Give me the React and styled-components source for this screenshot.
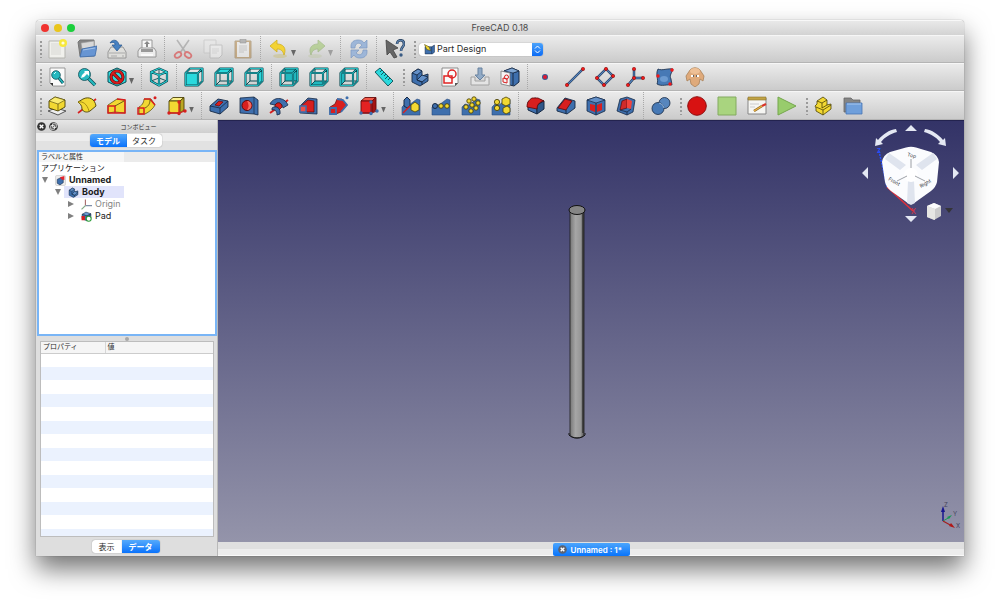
import { useState } from 'react';
import styled, { createGlobalStyle } from 'styled-components';

const GlobalStyle = createGlobalStyle`
  * {
    box-sizing: border-box;
  }

  body {
    margin: 0;
    background: #fff;
    color: #2b2b2b;
    font-family: Inter, 'Noto Sans CJK JP', sans-serif;
    font-size: 9px;
    line-height: 12px;
  }

  button,
  select {
    margin: 0;
    padding: 0;
    border: 0;
    background: none;
    color: inherit;
    font: inherit;
  }
`;

const Desktop = styled.div`
  display: flex;
  min-height: 100vh;
  padding: 20px 36px 51px;
`;

const Window = styled.main`
  display: flex;
  flex: 1;
  flex-direction: column;
  min-width: 0;
  overflow: hidden;
  border-radius: 4px 4px 0 0;
  background: #e3e3e3;
  box-shadow: 0 0 1px rgba(0, 0, 0, 0.5), 0 13px 26px rgba(0, 0, 0, 0.55);
`;

const TitleBar = styled.header`
  display: grid;
  grid-template-columns: 1fr auto 1fr;
  align-items: center;
  height: 15px;
  padding: 0 5px;
  border-top: 1px solid #f8f8f8;
  background: linear-gradient(#e9e9e9, #d3d3d3);
`;

const Lights = styled.div`
  display: flex;
  gap: 5px;
`;

const Light = styled.button`
  width: 8px;
  height: 8px;
  border-radius: 50%;
  background: ${(p) => p.$color};
`;

const Title = styled.h1`
  margin: 0;
  color: #4a4a4a;
  font-size: 9px;
  font-weight: 400;
`;

const ToolRow = styled.div`
  display: flex;
  align-items: center;
  height: ${(p) => p.$height || 28}px;
  overflow: hidden;
  border-top: 1px solid #f6f6f6;
  border-bottom: 1px solid #b4b4b4;
  background: linear-gradient(#ebebeb, #cbcbcb);
`;

const Grip = styled.span`
  flex: none;
  width: 6px;
  height: 18px;
  background: radial-gradient(circle at 5px 2px, #9a9a9a 1px, transparent 1px) 0 0 / 6px 4px;
`;

const Separator = styled.span`
  flex: none;
  align-self: stretch;
  width: ${(p) => p.$width}px;
  background: repeating-linear-gradient(#a8a8a8 0 1px, transparent 1px 2px) 2px 0 / 1px 100% no-repeat;
`;

const ToolButton = styled.button`
  display: flex;
  flex: none;
  align-items: center;
  justify-content: center;
  width: ${(p) => (p.$menu ? 37 : 30)}px;
  height: 26px;
  opacity: ${(p) => (p.$faded ? 0.5 : 1)};

  svg {
    display: block;
    width: 20px;
    height: 20px;
    flex: none;
  }
`;

const MenuArrow = styled.span`
  align-self: flex-end;
  width: 5px;
  height: 6px;
  margin: 0 0 6px 2px;
  background: #666;
  clip-path: polygon(0 0, 100% 0, 50% 100%);
`;

const Workbench = styled.label`
  display: grid;
  grid-template-columns: 16px 1fr 11px;
  align-items: center;
  width: 124px;
  height: 13px;
  margin-left: 3px;
  overflow: hidden;
  border-radius: 3px;
  background: #fff;
  box-shadow: 0 0 1px rgba(0, 0, 0, 0.5);

  > svg:first-child {
    width: 11px;
    height: 11px;
    justify-self: end;
  }
`;

const WorkbenchSelect = styled.select`
  height: 13px;
  padding-left: 2px;
  appearance: none;
  outline: none;
`;

const Stepper = styled.span`
  display: flex;
  align-items: center;
  justify-content: center;
  height: 13px;
  background: linear-gradient(#4ba3fb, #0c6bf5);
`;

const Content = styled.div`
  display: flex;
  flex: 1;
  min-height: 0;
`;

const Side = styled.aside`
  display: flex;
  flex: none;
  flex-direction: column;
  width: 182px;
  border-right: 1px solid #b9b9b9;
  background: #dedede;
`;

const DockTitle = styled.div`
  display: flex;
  align-items: center;
  gap: 3px;
  height: 13px;
  padding: 0 1px;
  background: linear-gradient(#e6e6e6, #cfcfcf);

  h2 {
    flex: 1;
    margin: 0;
    font-size: 6px;
    font-weight: 400;
    text-align: center;
  }
`;

const RoundButton = styled.button`
  width: 9px;
  height: 9px;

  svg {
    display: block;
    width: 9px;
    height: 9px;
  }
`;

const Segments = styled.div`
  display: flex;
  justify-content: center;
  padding: ${(p) => p.$padding};
  background: ${(p) => (p.$plain ? 'none' : 'linear-gradient(#ededed 50%, #e2e2e2 50%)')};
`;

const Segment = styled.button`
  width: ${(p) => p.$width}px;
  height: 13px;
  border-radius: ${(p) => (p.$last ? '0 3px 3px 0' : '3px 0 0 3px')};
  background: ${(p) => (p.$active ? 'linear-gradient(#55aafc, #0a72fb)' : '#fff')};
  box-shadow: 0 0 1px rgba(0, 0, 0, 0.5);
  color: ${(p) => (p.$active ? '#fff' : '#2b2b2b')};
  font-size: 8px;
  font-weight: ${(p) => (p.$active ? 700 : 400)};
`;

const TreeBox = styled.div`
  height: 186px;
  margin-left: 1px;
  border: 2px solid #79b5f6;
  background: #fff;
`;

const TreeHeader = styled.div`
  height: 10px;
  padding-left: 2px;
  background: linear-gradient(90deg, #f6f6f6 85px, #ebebeb 85px);
  font-size: 7px;
  line-height: 10px;
`;

const TreeRow = styled.div`
  display: flex;
  align-items: center;
  height: 12px;
  padding-left: ${(p) => p.$indent}px;
`;

const Toggle = styled.button`
  width: 6px;
  height: 6px;
  margin-right: 3px;
  background: #808080;
  clip-path: ${(p) => (p.$open ? 'polygon(0 0, 100% 0, 50% 100%)' : 'polygon(0 0, 100% 50%, 0 100%)')};
`;

const TreeLabel = styled.span`
  display: flex;
  align-items: center;
  gap: 3px;
  height: 12px;
  min-width: ${(p) => (p.$selected ? 60 : 0)}px;
  padding-left: ${(p) => (p.$plain ? 0 : 4)}px;
  background: ${(p) => (p.$selected ? '#e1e4fb' : 'none')};
  color: ${(p) => (p.$dim ? '#858585' : '#1c1c1c')};
  font-size: ${(p) => (p.$plain ? 8 : 9)}px;
  font-weight: ${(p) => (p.$bold ? 700 : 400)};

  svg {
    width: 11px;
    height: 11px;
  }
`;

const Splitter = styled.div`
  display: flex;
  align-items: center;
  justify-content: center;
  height: 5px;

  &::after {
    width: 4px;
    height: 4px;
    border-radius: 50%;
    background: #a8a8a8;
    content: '';
  }
`;

const PropertyBox = styled.div`
  flex: 1;
  margin: 0 3px 0 4px;
  border: 1px solid #bdbdbd;
  background: repeating-linear-gradient(#fff 0 14px, #ebf2fe 14px 27px) 0 11px;
`;

const PropertyTable = styled.table`
  width: 100%;
  border-collapse: collapse;
  table-layout: fixed;
  background: #f5f5f5;

  th {
    height: 11px;
    padding: 0 2px;
    border-bottom: 1px solid #ccc;
    font-size: 7px;
    font-weight: 400;
    line-height: 10px;
    text-align: left;
  }

  th:first-child {
    width: 64px;
    border-right: 1px solid #d6d6d6;
  }
`;

const Main = styled.section`
  display: flex;
  flex: 1;
  flex-direction: column;
  min-width: 0;
`;

const Viewport = styled.div`
  position: relative;
  display: flex;
  flex: 1;
  align-items: center;
  justify-content: center;
  padding: 0 28px 20px 0;
  border-top: 1px solid #23234f;
  background: linear-gradient(#333367, #9494aa);
`;

const NavCube = styled.svg`
  position: absolute;
  top: 1px;
  right: 2px;
`;

const AxisCross = styled.svg`
  position: absolute;
  right: 2px;
  bottom: 10px;
`;

const DocTabs = styled.div`
  display: flex;
  justify-content: center;
  height: 14px;
  padding-top: 1px;
  border-bottom: 1px solid #fafafa;
  background: linear-gradient(#e0e0e0 50%, #ededed 50%);
`;

const DocTab = styled.div`
  display: flex;
  align-items: center;
  gap: 4px;
  width: 77px;
  height: 13px;
  padding-left: 5px;
  border-radius: 2px;
  background: linear-gradient(#4ba5fd, #0874fb);
  color: #fff;
  font-weight: 600;
  white-space: nowrap;

  > button:last-child {
    font-size: 8px;
  }
`;

const BLUE = '#3e6fad';
const DARK = '#172a45';
const RED = '#d71f1f';
const YELLOW = '#f2d832';
const OLIVE = '#4b4208';
const TEAL = '#2bd9dd';
const DEEP = '#0c4d55';

// A solid seen from above: top, left and right faces
const Solid = ({ top, left, right, line = DARK }) => (
  <g stroke={line} strokeLinejoin="round">
    <path d="M2 6 9 2 18 5 11 9Z" fill={top} />
    <path d="M2 6 11 9V18L2 14Z" fill={left} />
    <path d="M11 9 18 5V13L11 18Z" fill={right} />
  </g>
);

// Box with its corner points and base axes marked
const PrimitiveBox = ({ top, front, side, line, axis, dot }) => (
  <>
    <g stroke={line} strokeWidth=".9" strokeLinejoin="round">
      <path d="M2 5 6 1.500H17L13 5Z" fill={top} />
      <path d="M2 5H13V17H2Z" fill={front} />
      <path d="M13 5 17 1.500V14L13 17Z" fill={side} />
    </g>
    <path d="M2 17H12V6M12 17 18 15" fill="none" stroke={axis} strokeWidth="1.300" />
    {[[2, 17], [12, 17.500], [18, 15], [12, 6]].map(([x, y]) => (
      <circle key={`${x}-${y}`} cx={x} cy={y} r="1.700" fill={dot} />
    ))}
  </>
);

const FACES = {
  front: 'M1.500 6H14V18.500H1.500Z',
  top: 'M1.500 6 6 1.500H18.500L14 6Z',
  right: 'M14 6 18.500 1.500V14L14 18.500Z',
  rear: 'M6 1.500H18.500V14H6Z',
  bottom: 'M1.500 18.500 6 14H18.500L14 18.500Z',
  left: 'M1.500 6 6 1.500V14L1.500 18.500Z',
};

const ViewCube = ({ face }) => {
  const back = 'M6 1.500V14H18.500M6 14 1.500 18.500';
  const outline = 'M1.500 6H14V18.500H1.500ZM1.500 6 6 1.500H18.500V14L14 18.500M14 6l4.500-4.500';
  const faceFirst = !['front', 'top', 'right'].includes(face);
  return (
    <g fill="none" strokeLinejoin="round">
      {faceFirst && <path d={FACES[face]} fill="#22b8bf" />}
      {face !== 'front' && <path d={back} stroke={DEEP} strokeWidth="1" />}
      {!faceFirst && <path d={FACES[face]} fill={TEAL} />}
      <path d={outline} stroke={DEEP} strokeWidth="2.100" />
      <path d={outline} stroke="#27c3c8" strokeWidth=".9" />
    </g>
  );
};

const Wire = ({ d, dots }) => (
  <>
    <path d={d} fill="none" stroke={DARK} strokeWidth="2.400" />
    <path d={d} fill="none" stroke="#5383bd" strokeWidth="1.300" />
    {dots.map(([x, y]) => (
      <circle key={`${x}-${y}`} cx={x} cy={y} r="1.700" fill="#f11818" stroke="#7d0c0c" strokeWidth=".5" />
    ))}
  </>
);

const Ground = () => <path d="M1 11 4 8 8 9 12 6 16 3 19 4V19H1Z" fill={BLUE} stroke="#284c7c" strokeWidth=".6" />;

const Balls = ({ at, r = 2.6 }) => at.map(([x, y]) => (
  <circle key={`${x}-${y}`} cx={x} cy={y} r={r} fill={YELLOW} stroke={OLIVE} strokeWidth=".9" />
));

const icons = {
  New: <>
    <path d="M2 2H18V19H2Z" fill="#f0f0ec" stroke="#b5b5b0" />
    <path d="M4 4h10v12H4Z" fill="#e4e4e0" />
    <circle cx="16" cy="4" r="4" fill="#f7e83c" /><circle cx="16" cy="4" r="1.600" fill="#fffce0" />
  </>,
  Open: <>
    <path d="M1 3 3 1H17V17H3Z" fill="#858585" stroke="#777" />
    <path d="M4 4 17 2V9L5 10Z" fill="#d8d8d8" stroke="#999" strokeWidth=".6" />
    <path d="M5 10 20 7 18 17 3 18Z" fill="#6795d3" stroke="#3b69a8" strokeWidth=".8" />
    <path d="M6 11 18 9" stroke="#a6c4ea" />
  </>,
  Save: <>
    <path d="M1 13 4 8H16L19 13V19H1Z" fill="#dededb" stroke="#888" strokeWidth=".8" />
    <path d="M2 14H18M4 17H10M15 17h2" stroke="#aaa" />
    <path d="M3 4C5 0 11 0 12 6H15L10 12 5 6H8C8 3 6 3 3 4Z" fill="#4681c2" stroke="#28578e" strokeWidth=".7" />
  </>,
  Print: <>
    <path d="M5 1H15V10H5Z" fill="#f7f7f7" stroke="#999" />
    <path d="M10 2 13 5H11V8H9V5H7Z" fill="#888" />
    <path d="M3 9H17L19 12V18H1V12Z" fill="#ececec" stroke="#858585" strokeWidth=".8" />
    <path d="M4 10H16V13H4Z" fill="#999" /><path d="M4 16H16" stroke="#fff" strokeWidth="1.500" />
  </>,
  Cut: <>
    <path d="M4 1 13 14M16 1 7 14" stroke="#888" strokeWidth="1.600" />
    <ellipse cx="5" cy="16" rx="3.500" ry="2.500" transform="rotate(-35 5 16)" fill="none" stroke="#d92020" strokeWidth="1.800" />
    <ellipse cx="15" cy="16" rx="3.500" ry="2.500" transform="rotate(35 15 16)" fill="none" stroke="#d92020" strokeWidth="1.800" />
  </>,
  Copy: <>
    <path d="M1 1H13V14H1Z" fill="#e9e9e9" stroke="#bbb" />
    <path d="M7 6H19V16L16 19H7Z" fill="#f4f4f4" stroke="#aaa" />
    <path d="M9 10H16M9 12H16M9 14H14" stroke="#bbb" strokeWidth=".7" />
  </>,
  Paste: <>
    <path d="M2 2H18V19H2Z" fill="#b57f35" stroke="#8f713f" />
    <path d="M4 3H16V18H4Z" fill="#f2f2f2" />
    <path d="M7 0H13V4H7Z" fill="#888" stroke="#555" strokeWidth=".6" />
    <path d="M6 7H14M6 9H14M6 11H14M6 13H11" stroke="#999" strokeWidth=".7" />
  </>,
  Undo: <>
    <ellipse cx="11" cy="17" rx="7" ry="2" fill="#c9c07e" opacity=".5" />
    <path d="M1 7 8 1V5C14 5 18 9 15 16 14 12 12 10 8 10V13Z" fill="#f3d334" stroke="#cfae22" strokeWidth=".8" />
  </>,
  Redo: <>
    <ellipse cx="9" cy="17" rx="7" ry="2" fill="#b7c493" opacity=".6" />
    <path d="M19 7 12 1V5C6 5 2 9 5 16 6 12 8 10 12 10V13Z" fill="#94c25a" stroke="#759c45" strokeWidth=".8" />
  </>,
  Refresh: <>
    <path d="M2 9V7C2 3 5 1 9 1 12 1 14 2 15 4L18 1V9H10L13 6C10 3 6 4 6 9Z" fill="#9db6d8" stroke="#7d99c2" strokeWidth=".7" />
    <path d="M18 11V13C18 17 15 19 11 19 8 19 6 18 5 16L2 19V11H10L7 14C10 17 14 16 14 11Z" fill="#9db6d8" stroke="#7d99c2" strokeWidth=".7" />
  </>,
  "What's this?": <>
    <path d="M1 1 13 9 8 11 12 18 9 19 5 13 2 16Z" fill="#666" stroke="#444" strokeWidth=".8" />
    <path d="M12 5C12 0 19 0 19 5 19 8 16 8 16 12" fill="none" stroke="#253e5c" strokeWidth="2.600" />
    <path d="M12 5C12 0 19 0 19 5 19 8 16 8 16 12" fill="none" stroke="#6288b3" strokeWidth="1.200" />
    <circle cx="16" cy="16" r="1.700" fill="#395b84" />
  </>,
  'Fit all': <>
    <path d="M3 1H18V19H6L3 16Z" fill="#fafafa" stroke="#777" strokeWidth=".7" />
    <path d="M3 16H6V19Z" fill="#333" />
    <path d="M12 11 16 16" stroke={DEEP} strokeWidth="3" /><path d="M12 11 16 16" stroke="#25b9bf" strokeWidth="1.500" />
    <circle cx="9" cy="8" r="4.300" fill="#25b9bf" stroke={DEEP} strokeWidth=".8" /><path d="M7 7 9 5" stroke="#c9ffff" />
  </>,
  'Fit selection': <>
    <path d="M11 11 18 18" stroke={DEEP} strokeWidth="3.600" /><path d="M11 11 18 18" stroke="#25b9bf" strokeWidth="2.200" />
    <circle cx="7.500" cy="7.500" r="6" fill="#29b9c0" stroke={DEEP} strokeWidth=".8" />
    <path d="M4 11 5 8 8 5 7 4H12V9L10 7 7 10Z" fill="#fff" />
  </>,
  'Draw style': <>
    <path d="M10 1 19 5V15L10 19 1 15V5Z" fill={TEAL} stroke={DEEP} />
    <circle cx="10" cy="10" r="6" fill="none" stroke="#690808" strokeWidth="3.200" /><path d="M6 6 14 14" stroke="#690808" strokeWidth="3.200" />
    <circle cx="10" cy="10" r="6" fill="none" stroke="#d81c1c" strokeWidth="1.800" /><path d="M6 6 14 14" stroke="#d81c1c" strokeWidth="1.800" />
  </>,
  Axonometric: <g fill="none" strokeLinejoin="round">
    <path d="M2 14 10 11 18 14M10 1.500V11" stroke={DEEP} strokeWidth=".9" />
    <path d="M10 1.500 18 5V14L10 18.500 2 14V5ZM2 5 10 8 18 5M10 8V18.500" stroke={DEEP} strokeWidth="2.200" />
    <path d="M10 1.500 18 5V14L10 18.500 2 14V5ZM2 5 10 8 18 5M10 8V18.500" stroke={TEAL} strokeWidth="1" />
  </g>,
  Front: <ViewCube face="front" />,
  Top: <ViewCube face="top" />,
  Right: <ViewCube face="right" />,
  Rear: <ViewCube face="rear" />,
  Bottom: <ViewCube face="bottom" />,
  Left: <ViewCube face="left" />,
  Measure: <>
    <path d="M1 5 6 1 19 14 14 19Z" fill={TEAL} stroke={DEEP} strokeWidth=".9" />
    <path d="M8 3 6 5M10 5 7 8M12 7 10 9M14 9 11 12M16 11 14 13" stroke={DEEP} strokeWidth=".9" />
  </>,
  Body: <g stroke={DARK} strokeLinejoin="round" strokeWidth=".9">
    <path d="M2 6 8 2 12 4V9L18 7V14L10 19 2 15Z" fill={BLUE} />
    <path d="M2 6 7 8 12 4 8 2ZM7 13 12 15 18 10 12 8Z" fill="#6390c8" />
    <path d="M7 8V13L12 15V18" fill="none" />
  </g>,
  Sketch: <>
    <path d="M2 1H18V16L15 19H2Z" fill="#fafafa" stroke="#777" strokeWidth=".8" />
    <path d="M15 19V16H18" fill="#555" />
    <circle cx="12" cy="7" r="4" fill="none" stroke="#df2424" strokeWidth="1.500" />
    <path d="M4 9H12V16H4Z" fill="none" stroke="#df2424" strokeWidth="1.500" />
  </>,
  'Edit sketch': <>
    <path d="M1 10V18H19V10H15V14H5V10Z" fill="#e4e4e4" stroke="#a2a2a2" />
    <path d="M8 1H12V8H15L10 13 5 8H8Z" fill="#91aac6" stroke="#68829f" />
  </>,
  'Map sketch': <>
    <path d="M4 4 12 1 19 4V15L14 19 6 17Z" fill={BLUE} stroke={DARK} /><path d="M13 6V18M13 6 19 4" stroke={DARK} />
    <path d="M4 4 12 1 19 4 13 6Z" fill="#7ea5d2" stroke={DARK} strokeWidth=".7" />
    <path d="M1 4 10 6V19L1 17Z" fill="#f5f5f5" stroke="#777" strokeWidth=".8" />
    <circle cx="6.500" cy="10" r="2" fill="none" stroke={RED} /><path d="M3 11 7 12V16L3 15Z" fill="none" stroke={RED} />
  </>,
  Point: <><circle cx="10" cy="10" r="3" fill="#365c91" /><circle cx="10" cy="10" r="2" fill="#df1831" /></>,
  Line: <Wire d="M2 18 18 2" dots={[[2, 18], [18, 2]]} />,
  Plane: <Wire d="M11 2 18 9 9 18 2 11Z" dots={[[11, 2], [18, 9], [9, 18], [2, 11]]} />,
  'Coordinate system': <Wire d="M9 2V11L3 18M9 11H18" dots={[[9, 2], [9, 11], [3, 18], [18, 11]]} />,
  'Shape binder': <>
    <path d="M3 2C7 4 13 1 18 2 17 6 14 8 16 12L17 18C12 17 7 20 2 17 4 12 0 8 3 2Z" fill="#4779b5" stroke={DARK} strokeWidth=".8" />
    <ellipse cx="9" cy="12" rx="4" ry="3" fill="#6c9ad0" />
    {[[17, 3], [3, 9], [15, 17]].map(([x, y]) => <circle key={x} cx={x} cy={y} r="1.700" fill="#f11818" />)}
  </>,
  Clone: <>
    <path d="M5 3C8 0 12 0 15 3L19 9 18 14 15 12 14 17 10 20 6 17 5 12 2 14 1 9Z" fill="#dfaa7b" stroke="#a98259" strokeWidth=".8" />
    <ellipse cx="10" cy="4" rx="5" ry="3" fill="#eec096" />
    <path d="M6 9H9M11 9H14" stroke="#fff" strokeWidth="2.200" /><path d="M8 9h1M11 9h1" stroke="#333" strokeWidth="1.600" />
  </>,
  Pad: <>
    <path d="M1 15 9 12 19 15 11 19Z" fill="#eee" stroke="#555" />
    <path d="M2 5 8 1 18 4V11L11 15 2 12Z" fill={YELLOW} stroke={OLIVE} strokeWidth=".9" />
    <path d="M2 5 8 1 18 4 11 8Z" fill="#faec6e" stroke={OLIVE} strokeWidth=".6" /><path d="M11 8V15" stroke={OLIVE} strokeWidth=".7" />
  </>,
  Revolution: <>
    <path d="M1 17 19 3" stroke={RED} strokeWidth="1.600" />
    <path d="M1 6 6 3C12 0 18 3 19 10L13 15C10 17 6 16 5 13 5 9 3 8 1 6Z" fill={YELLOW} stroke={OLIVE} strokeWidth=".9" />
    <path d="M1 6C6 5 10 8 12 15" fill="none" stroke="#a88f12" />
  </>,
  Loft: <>
    <path d="M1 9 10 3 18 4V17L8 16 1 17Z" fill={YELLOW} stroke={OLIVE} strokeWidth=".7" />
    <path d="M10 3 18 4V17L8 17M1 10H8V17H1Z" fill="none" stroke={RED} strokeWidth="1.500" /><path d="M8 10 17 5" stroke={OLIVE} strokeWidth=".8" />
  </>,
  Sweep: <>
    <path d="M2 11C6 9 7 5 7 3L14 3 18 9C16 13 12 16 8 18H2Z" fill={YELLOW} stroke={OLIVE} strokeWidth=".7" />
    <path d="M7 3 13 3 18 9M1 12H7V18H1Z" fill="none" stroke={RED} strokeWidth="1.500" /><circle cx="18" cy="1.800" r="1.500" fill={RED} />
    <path d="M8 12C12 10 13 7 13 4" fill="none" stroke={OLIVE} strokeWidth=".8" />
  </>,
  'Additive primitive': <PrimitiveBox top="#fbf08a" front={YELLOW} side="#bca622" line={OLIVE} axis={RED} dot={RED} />,
  Pocket: <>
    <path d="M1 10 9 3 19 5V11L11 18 1 15Z" fill={BLUE} stroke={DARK} strokeWidth=".9" />
    <path d="M1 10 11 12 19 5M11 12V18" fill="none" stroke={DARK} strokeWidth=".8" />
    <path d="M6 9 10 5 14 6 10 10Z" fill={RED} stroke="#670b0b" strokeWidth=".7" />
  </>,
  Hole: <>
    <path d="M1 2 15 1 19 4V19L15 18 1 17Z" fill={BLUE} stroke={DARK} strokeWidth=".8" /><path d="M15 1V18" stroke={DARK} strokeWidth=".7" />
    <circle cx="8" cy="9.500" r="5" fill={RED} stroke="#5d0909" /><path d="M8 5A4.500 4.500 0 0 1 8 14 8 8 0 0 0 8 5" fill="#f56a5f" />
  </>,
  Groove: <>
    <path d="M1 17 19 4" stroke={RED} strokeWidth="2" />
    <path d="M1 8C4 1 15 0 19 9L14 12C13 7 9 5 6 9Z" fill={BLUE} stroke={DARK} strokeWidth=".8" />
    <path d="M6 9C9 5 13 7 13 11L10 14C9 11 8 11 6 12Z" fill={RED} stroke="#5d0909" strokeWidth=".8" />
    <path d="M3 12C7 9 12 12 11 18L8 19C8 15 6 13 3 14Z" fill={BLUE} stroke={DARK} strokeWidth=".8" />
  </>,
  'Subtractive loft': <>
    <path d="M9 2 18 3V18L1 17V10Z" fill={BLUE} stroke={DARK} strokeWidth=".8" />
    <path d="M2 10 9 4 15 5V16L8 16Z" fill={RED} stroke="#5d0909" strokeWidth=".7" />
    <path d="M1 10H7V16H1Z" fill="#ed514b" stroke={BLUE} strokeWidth="1.500" />
  </>,
  'Subtractive sweep': <>
    <path d="M1 11 6 8 8 3 13 3 18 9 12 16 7 18H1Z" fill={RED} stroke="#5d0909" strokeWidth=".7" />
    <path d="M8 3 14 4 18 9 12 16M1 12H7V18H1Z" fill="none" stroke={BLUE} strokeWidth="1.800" /><circle cx="18" cy="1.800" r="1.500" fill={BLUE} />
  </>,
  'Subtractive primitive': <PrimitiveBox top="#f25a4a" front="#e32222" side="#a41212" line="#680b0b" axis="#8d1a22" dot={BLUE} />,
  Mirrored: <>
    <Ground /><path d="M3 4 6 1 9 4V10L6 12 3 10Z" fill={BLUE} stroke={DARK} /><path d="M2 17 9 10" stroke={RED} strokeWidth="1.500" />
    <path d="M10 9 14 6 18 9V14L14 16 10 14Z" fill={YELLOW} stroke={OLIVE} strokeWidth=".8" />
  </>,
  'Linear pattern': <><Ground /><circle cx="4" cy="10" r="2.500" fill={BLUE} stroke={DARK} /><Balls at={[[10, 10], [16, 10]]} r={2.3} /></>,
  'Polar pattern': <><Ground /><Balls at={[[8, 5], [13, 3], [17, 7], [15, 12], [10, 15], [5, 11], [11, 9]]} r={2.2} /></>,
  MultiTransform: <>
    <Ground /><path d="M11 3 15 1 19 3V8L15 10 11 8ZM12 12 16 10 19 12V16L15 18 12 16Z" fill={YELLOW} stroke={OLIVE} strokeWidth=".8" />
    <Balls at={[[6, 6], [6, 12]]} />
  </>,
  Fillet: <>
    <Solid top={BLUE} left={BLUE} right="#2f5688" />
    <path d="M6 2H12L18 5C13 6 11 9 11 13L1 11C1 6 3 4 6 2Z" fill={RED} stroke="#5d0909" strokeWidth=".8" />
  </>,
  Chamfer: <>
    <path d="M1 12 9 2 19 5V12L11 18 1 15Z" fill={BLUE} stroke={DARK} strokeWidth=".9" />
    <path d="M2 12 9 3 16 5 10 14Z" fill={RED} stroke="#5d0909" strokeWidth=".8" /><path d="M10 14V18" stroke={DARK} />
  </>,
  Draft: <>
    <path d="M1 4 10 1 19 4V15L10 19 1 15Z" fill={BLUE} stroke={DARK} strokeWidth=".8" />
    <path d="M1 4 10 1 19 4 10 7Z" fill="#6390c8" stroke={DARK} strokeWidth=".7" /><path d="M10 7V19" stroke={DARK} />
    <path d="M4 8 9 9V16L4 14ZM11 9 16 7V14L11 16Z" fill={RED} />
  </>,
  Thickness: <>
    <path d="M4 3 11 1 19 4 17 16 11 19 1 15Z" fill={BLUE} stroke={DARK} strokeWidth=".8" />
    <path d="M6 5 11 3V12L4 14Z" fill="#d12b2b" stroke="#5d0909" strokeWidth=".7" /><path d="M11 3 16 5 15 13 11 12Z" fill="#f2453e" />
    <path d="M4 14 11 16 15 13M11 16V19" fill="none" stroke={DARK} strokeWidth=".8" />
  </>,
  Boolean: <>
    <circle cx="13.500" cy="7" r="5.500" fill="#5786bd" stroke={DARK} strokeWidth=".8" />
    <circle cx="7" cy="12.500" r="6" fill="#4779b5" stroke={DARK} strokeWidth=".8" />
    <path d="M8 7A6 6 0 0 1 13 12" fill="none" stroke="#96b9e0" />
  </>,
  'Record macro': <circle cx="10" cy="10" r="9.300" fill="#d81212" stroke="#8d1010" />,
  'Stop macro': <path d="M1 1H19V19H1Z" fill="#a9d47f" stroke="#83aa61" />,
  Macros: <>
    <path d="M1 2H19V18H1Z" fill="#f6f6f3" stroke="#858585" /><path d="M1 1H19V4H1Z" fill="#c0a345" stroke="#89732b" strokeWidth=".6" />
    <path d="M3 8H12M3 11H8" stroke="#ccc" /><path d="M7 15 15 10" stroke="#856022" strokeWidth="2.500" />
    <path d="M7 15 15 10" stroke="#ecb443" strokeWidth="1.200" /><path d="M15 10 19 8" stroke="#d93429" strokeWidth="2.200" />
  </>,
  'Run macro': <path d="M1 1 19 10 1 19Z" fill="#98cc6c" stroke="#74a64c" />,
  Part: <g stroke={OLIVE} strokeLinejoin="round" strokeWidth=".8">
    <path d="M4 5 10 1 14 4V9L18 8V13L10 19 3 15V12L2 10 4 8Z" fill={YELLOW} />
    <path d="M4 5 9 7 14 4M9 7V12L14 9M3 11 10 14 18 9M10 14V19" fill="none" />
  </g>,
  Group: <>
    <path d="M1 2H8L10 4H17V16H1Z" fill="#858585" stroke="#666" strokeWidth=".8" />
    <path d="M3 7H19V18H3Z" fill="#6f9fdb" stroke="#4775b4" strokeWidth=".8" /><path d="M4 8H18" stroke="#a9c9ef" />
  </>,
};

const fileTools = ['New', 'Open', 'Save', 'Print', '|', 'Cut', 'Copy', 'Paste', '|', 'Undo', 'Redo', '|', 'Refresh', '|', "What's this?"];

const viewTools = [
  'Fit all', 'Fit selection', 'Draw style', '|', 'Axonometric', '|', 'Front', 'Top', 'Right', '|',
  'Rear', 'Bottom', 'Left', '|', 'Measure', ':', 'Body', 'Sketch', 'Edit sketch', 'Map sketch', '|',
  'Point', 'Line', 'Plane', 'Coordinate system', 'Shape binder', 'Clone',
];

const designTools = [
  'Pad', 'Revolution', 'Loft', 'Sweep', 'Additive primitive', '|',
  'Pocket', 'Hole', 'Groove', 'Subtractive loft', 'Subtractive sweep', 'Subtractive primitive', '|',
  'Mirrored', 'Linear pattern', 'Polar pattern', 'MultiTransform', '|',
  'Fillet', 'Chamfer', 'Draft', 'Thickness', '|', 'Boolean', ':',
  'Record macro', 'Stop macro', 'Macros', 'Run macro', ':', 'Part', 'Group',
];

const withMenu = ['Undo', 'Redo', 'Draw style', 'Additive primitive', 'Subtractive primitive'];
const faded = ['Cut', 'Copy', 'Paste', 'Redo'];

const Icon = ({ name }) => <svg viewBox="0 0 20 20" width="20" height="20" aria-hidden="true">{icons[name]}</svg>;

const Toolbar = ({ label, items, height, gap = 5, children }) => (
  <ToolRow role="toolbar" aria-label={label} $height={height}>
    <Grip />
    {items.map((item, i) => {
      if (item === '|') return <Separator key={i} $width={gap} />;
      if (item === ':') return <Grip key={i} />;
      const menu = withMenu.includes(item);
      return (
        <ToolButton key={item} type="button" aria-label={item} $menu={menu} $faded={faded.includes(item)}>
          <Icon name={item} />
          {menu && <MenuArrow />}
        </ToolButton>
      );
    })}
    {children}
  </ToolRow>
);

const CloseGlyph = ({ color = '#333' }) => (
  <svg viewBox="0 0 10 10" aria-hidden="true">
    <circle cx="5" cy="5" r="4.800" fill={color} />
    <path d="M3 3 7 7M7 3 3 7" stroke="#fff" strokeWidth="1.500" />
  </svg>
);

const DocGlyph = () => (
  <svg viewBox="0 0 20 20" aria-hidden="true">
    <rect x="1" y="1" width="18" height="18" rx="2" fill="#eee" stroke="#bbb" />
    <path d="M4 8 10 5 15 8V14L9 18 4 15Z" fill={BLUE} stroke={DARK} />
    <path d="M9 4 17 2V9L12 8Z" fill="#e3252c" />
  </svg>
);

const OriginGlyph = () => (
  <svg viewBox="0 0 20 20" aria-hidden="true">
    <path d="M8 1V12" stroke="#a86a6a" strokeWidth="2" />
    <path d="M8 12H20" stroke="#7f8fa8" strokeWidth="2" />
    <path d="M8 12 1 19" stroke="#7ea882" strokeWidth="2" />
  </svg>
);

const PadGlyph = () => (
  <svg viewBox="0 0 20 20" aria-hidden="true">
    <Solid top="#6c9cd2" left={BLUE} right="#2d5688" />
    <path d="M1 9H7V17H1Z" fill={RED} />
    <circle cx="14" cy="14" r="4.500" fill="#fff" stroke="#2d9e3a" strokeWidth="2" />
  </svg>
);

const WorkbenchGlyph = () => (
  <svg viewBox="0 0 20 20" aria-hidden="true">
    <path d="M2 5H14L19 2V15L15 18H2Z" fill={BLUE} stroke={DARK} />
    <path d="M14 5V18" stroke={DARK} />
    <path d="M1 1 9 5 12 12 5 10Z" fill={YELLOW} stroke={OLIVE} />
  </svg>
);

const Rod = () => (
  <svg width="18" height="234" viewBox="0 0 18 234" role="img" aria-label="Pad">
    <defs>
      <linearGradient id="rod">
        <stop offset="0" stopColor="#777" />
        <stop offset=".4" stopColor="#a6a6a6" />
        <stop offset=".75" stopColor="#979797" />
        <stop offset="1" stopColor="#555" />
      </linearGradient>
    </defs>
    <path d="M2 5V229A7 4 0 0 0 16 229V5Z" fill="url(#rod)" stroke="#1c1c1c" strokeWidth=".8" />
    <path d="M15 8V228" stroke="#252525" strokeWidth="1.200" />
    <path d="M1 228V230C4 234 14 234 17 230V228" fill="none" stroke="#151515" />
    <ellipse cx="9" cy="5" rx="8" ry="4.500" fill="#858585" stroke="#111" />
  </svg>
);

const Navigation = () => (
  <NavCube width="102" height="100" viewBox="0 0 102 100" role="img" aria-label="Navigation cube">
    <g fill="#e4e8f3">
      <path d="M51 3 57 9H45ZM51 100 45 94H57ZM2 51 8 45V57ZM99 51 93 57V45Z" />
      <path d="M36 7 37 10C30 12 25 15 21 20L23 22 15 24 16 16 18 18C23 12 29 8 36 7Z" />
      <path d="M65 7 64 10C71 12 76 15 80 20L78 22 86 24 85 16 83 18C78 12 72 8 65 7Z" />
    </g>
    <path d="M19 29 27 65" stroke="#2450ff" strokeWidth="1.500" strokeDasharray="2 1" />
    <path d="M27 65 53 89" stroke="#e0303a" strokeWidth="1.500" />
    <path d="M46 25.500Q51 24 56 25.500L71 30Q78 33 79 40L77 60Q76 65 71 69L57 79Q51 85 45 79L31 69Q26 65 25 60L22 40Q23 33 30 30Z" fill="#fbfcfe" />
    <g fill="#dfe4ee">
      <path d="M29 31 25 37 40 48 46 43ZM73 31 77 37 62 48 56 43ZM48 59H54L55 81 51 83 47 81Z" />
    </g>
    <circle cx="51" cy="53" r="7" fill="#fff" />
    <path d="M51 37V46M47 54 37 59M55 54 65 59" stroke="#858991" strokeWidth=".8" />
    <g fill="#33353b" fontFamily="Inter, sans-serif" fontSize="5">
      <text x="47" y="34" transform="rotate(14 47 34)">Top</text>
      <text x="28" y="58" transform="rotate(30 28 58)">Front</text>
      <text x="61" y="66" transform="rotate(-30 61 66)">Right</text>
    </g>
    <text x="17" y="31" fill="#2450ff" fontSize="6" fontWeight="700">Z</text>
    <text x="51" y="92" fill="#e03440" fontSize="7">X</text>
    <path d="M67 84 74 81 81 84V94L74 98 67 95Z" fill="#cbcbcb" />
    <path d="M67 84 74 81 81 84 75 87Z" fill="#fbfbfb" /><path d="M67 84 75 87V98L67 95Z" fill="#e6e6e3" />
    <path d="M85 86H93L89 91Z" fill="#343438" />
  </NavCube>
);

const Axes = () => (
  <AxisCross width="26" height="32" viewBox="0 0 26 32" role="img" aria-label="Axis cross">
    <path d="M7 21V9" stroke="#17178f" strokeWidth="1.500" /><path d="M5 12 7 6 9 12Z" fill="#17178f" />
    <path d="M7 21 14 17" stroke="#189a55" /><path d="M11 17 16 15 13 19Z" fill="#189a55" />
    <path d="M7 21 16 26" stroke="#a32020" strokeWidth="1.300" /><path d="M13 26 19 28 15 23Z" fill="#b01818" />
    <g fill="#45455c" fontSize="6" fontFamily="Inter, sans-serif">
      <text x="8" y="7">Z</text><text x="17" y="16">Y</text><text x="20" y="28">X</text>
    </g>
  </AxisCross>
);

const ComboView = () => {
  const [tab, setTab] = useState('model');
  const [table, setTable] = useState('data');

  return (
    <Side>
      <DockTitle>
        <RoundButton type="button" aria-label="Close"><CloseGlyph /></RoundButton>
        <RoundButton type="button" aria-label="Float">
          <svg viewBox="0 0 10 10" aria-hidden="true">
            <circle cx="5" cy="5" r="4.800" fill="#333" />
            <path d="M4 2H8V6H4ZM2 4H6V8H2Z" fill="#333" stroke="#fff" strokeWidth=".9" />
          </svg>
        </RoundButton>
        <h2>コンボビュー</h2>
      </DockTitle>
      <Segments $padding="1px 2px 3px 0">
        <Segment type="button" $width={37} $active={tab === 'model'} onClick={() => setTab('model')}>モデル</Segment>
        <Segment type="button" $width={35} $last $active={tab === 'task'} onClick={() => setTab('task')}>タスク</Segment>
      </Segments>
      <TreeBox>
        <TreeHeader>ラベルと属性</TreeHeader>
        <TreeRow $indent={2}><TreeLabel $plain>アプリケーション</TreeLabel></TreeRow>
        <TreeRow $indent={3}>
          <Toggle type="button" aria-label="Collapse Unnamed" $open />
          <TreeLabel $bold><DocGlyph />Unnamed</TreeLabel>
        </TreeRow>
        <TreeRow $indent={16}>
          <Toggle type="button" aria-label="Collapse Body" $open />
          <TreeLabel $bold $selected><Icon name="Body" />Body</TreeLabel>
        </TreeRow>
        <TreeRow $indent={29}>
          <Toggle type="button" aria-label="Expand Origin" />
          <TreeLabel $dim><OriginGlyph />Origin</TreeLabel>
        </TreeRow>
        <TreeRow $indent={29}>
          <Toggle type="button" aria-label="Expand Pad" />
          <TreeLabel><PadGlyph />Pad</TreeLabel>
        </TreeRow>
      </TreeBox>
      <Splitter />
      <PropertyBox>
        <PropertyTable>
          <thead>
            <tr><th scope="col">プロパティ</th><th scope="col">値</th></tr>
          </thead>
        </PropertyTable>
      </PropertyBox>
      <Segments $plain $padding="3px 2px 3px 0">
        <Segment type="button" $width={30} $active={table === 'view'} onClick={() => setTable('view')}>表示</Segment>
        <Segment type="button" $width={38} $last $active={table === 'data'} onClick={() => setTable('data')}>データ</Segment>
      </Segments>
    </Side>
  );
};

const App = () => (
  <>
    <GlobalStyle />
    <Desktop>
      <Window>
        <TitleBar>
          <Lights>
            <Light type="button" aria-label="Close window" $color="#f0332f" />
            <Light type="button" aria-label="Minimize" $color="#e9c51b" />
            <Light type="button" aria-label="Zoom" $color="#1bcf3c" />
          </Lights>
          <Title>FreeCAD 0.18</Title>
        </TitleBar>
        <Toolbar label="File" items={fileTools} gap={6}>
          <Grip />
          <Workbench>
            <WorkbenchGlyph />
            <WorkbenchSelect aria-label="Workbench" defaultValue="Part Design">
              <option>Part Design</option>
            </WorkbenchSelect>
            <Stepper>
              <svg width="7" height="9" viewBox="0 0 7 9" aria-hidden="true">
                <path d="M1 3.500 3.500 1 6 3.500M1 5.500 3.500 8 6 5.500" fill="none" stroke="#fff" />
              </svg>
            </Stepper>
          </Workbench>
        </Toolbar>
        <Toolbar label="View" items={viewTools} />
        <Toolbar label="Part Design" items={designTools} height={29} />
        <Content>
          <ComboView />
          <Main>
            <Viewport>
              <Rod />
              <Navigation />
              <Axes />
            </Viewport>
            <DocTabs>
              <DocTab>
                <RoundButton type="button" aria-label="Close document"><CloseGlyph color="#5b6270" /></RoundButton>
                <button type="button">Unnamed : 1*</button>
              </DocTab>
            </DocTabs>
          </Main>
        </Content>
      </Window>
    </Desktop>
  </>
);

export default App;
